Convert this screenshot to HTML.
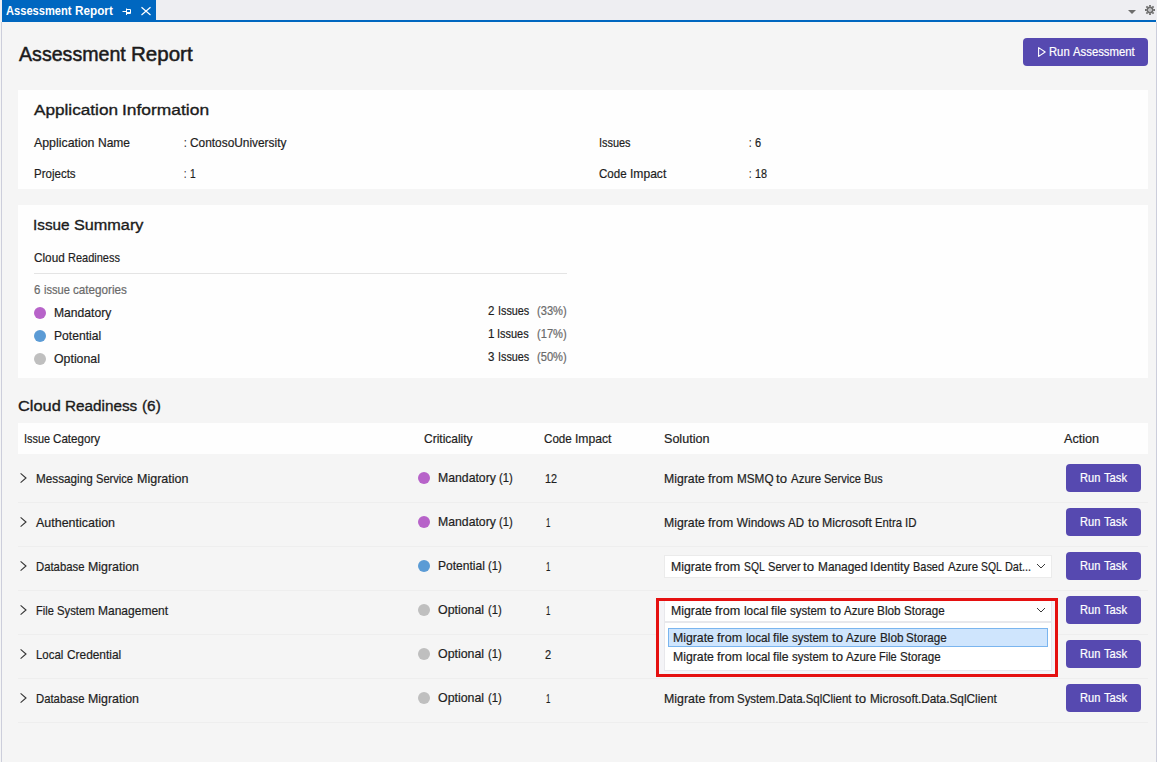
<!DOCTYPE html>
<html><head><meta charset="utf-8"><title>Assessment Report</title>
<style>
html,body{margin:0;padding:0}
body{width:1157px;height:762px;overflow:hidden;background:#f5f5f5;font-family:"Liberation Sans",sans-serif;position:relative}
.a{position:absolute}
.t{position:absolute;white-space:nowrap;line-height:1;transform-origin:0 0}
.t{color:#1e1e1e;-webkit-text-stroke:0.2px}
.dot{width:12px;height:12px;border-radius:50%}
</style></head><body>
<!-- window chrome -->
<div class="a" style="left:0;top:0;width:1157px;height:20px;background:#eeeef2"></div>
<div class="a" style="left:2px;top:0;width:154px;height:22px;background:#0067c0"></div>
<div class="a" style="left:2px;top:20px;width:1154px;height:2px;background:#0067c0"></div>
<div class="a" style="left:1px;top:22px;width:1px;height:740px;background:#ccceDB"></div>
<div class="a" style="left:1156px;top:22px;width:1px;height:740px;background:#ccceDB"></div>
<!-- tab icons -->
<svg class="a" style="left:120px;top:4px" width="36" height="16" viewBox="0 0 36 16">
 <g fill="none" stroke="#fff" stroke-width="1">
  <path d="M2.5 7.5H6M6.5 4.5v6.5M6.5 5.5H10.5V9.5H6.5M6.5 8.5H10.5"/>
  <path d="M21.5 3.3L30.5 11M30.5 3.3L21.5 11" stroke-width="1.2"/>
 </g>
</svg>
<svg class="a" style="left:1126px;top:3px" width="31" height="15" viewBox="0 0 31 15">
 <path d="M2 7H10L6 11Z" fill="#6d6d6d"/>
 <g transform="translate(24,7)" fill="none" stroke="#6d6d6d">
  <circle r="2.6" stroke-width="1.6"/><circle r="0.7" fill="#6d6d6d" stroke="none"/>
  <g stroke-width="1.8"><path d="M0-5V-3.2M0 5V3.2M-5 0H-3.2M5 0H3.2M-3.6-3.6L-2.4-2.4M3.6 3.6L2.4 2.4M-3.6 3.6L-2.4 2.4M3.6-3.6L2.4-2.4"/></g>
 </g>
</svg>
<!-- run assessment button -->
<div class="a" style="left:1023px;top:38px;width:125px;height:28px;background:#5649b0;border-radius:4px"></div>
<svg class="a" style="left:1036px;top:45px" width="12" height="14" viewBox="0 0 12 14"><path d="M2.6 2.6L9.2 7L2.6 11.4Z" fill="none" stroke="#fff" stroke-width="1.1" stroke-linejoin="round"/></svg>
<!-- panels -->
<div class="a" style="left:18px;top:90px;width:1130px;height:99px;background:#fefefe"></div>
<div class="a" style="left:18px;top:205px;width:1130px;height:173px;background:#fefefe"></div>
<div class="a" style="left:34px;top:273px;width:533px;height:1px;background:#e4e4e4"></div>
<div class="a dot" style="left:34px;top:307px;background:#b763c9"></div>
<div class="a dot" style="left:34px;top:330px;background:#5b9bd5"></div>
<div class="a dot" style="left:34px;top:353px;background:#bfbfbf"></div>
<!-- table -->
<div class="a" style="left:18px;top:423px;width:1130px;height:31px;background:#fefefe"></div>
<div class="a" style="left:18px;top:502px;width:1130px;height:1px;background:#eee"></div>
<svg class="a" style="left:18px;top:471px" width="12" height="14" viewBox="0 0 12 14"><path d="M2.6 2.4L8 7L2.6 11.6" fill="none" stroke="#333" stroke-width="1.1"/></svg>
<div class="a dot" style="left:418px;top:472px;background:#b763c9"></div>
<div class="a" style="left:1066px;top:464px;width:75px;height:28px;background:#5649b0;border-radius:4px"></div>
<div class="a" style="left:18px;top:546px;width:1130px;height:1px;background:#eee"></div>
<svg class="a" style="left:18px;top:515px" width="12" height="14" viewBox="0 0 12 14"><path d="M2.6 2.4L8 7L2.6 11.6" fill="none" stroke="#333" stroke-width="1.1"/></svg>
<div class="a dot" style="left:418px;top:516px;background:#b763c9"></div>
<div class="a" style="left:1066px;top:508px;width:75px;height:28px;background:#5649b0;border-radius:4px"></div>
<div class="a" style="left:18px;top:590px;width:1130px;height:1px;background:#eee"></div>
<svg class="a" style="left:18px;top:559px" width="12" height="14" viewBox="0 0 12 14"><path d="M2.6 2.4L8 7L2.6 11.6" fill="none" stroke="#333" stroke-width="1.1"/></svg>
<div class="a dot" style="left:418px;top:560px;background:#5b9bd5"></div>
<div class="a" style="left:1066px;top:552px;width:75px;height:28px;background:#5649b0;border-radius:4px"></div>
<div class="a" style="left:18px;top:634px;width:1130px;height:1px;background:#eee"></div>
<svg class="a" style="left:18px;top:603px" width="12" height="14" viewBox="0 0 12 14"><path d="M2.6 2.4L8 7L2.6 11.6" fill="none" stroke="#333" stroke-width="1.1"/></svg>
<div class="a dot" style="left:418px;top:604px;background:#bfbfbf"></div>
<div class="a" style="left:1066px;top:596px;width:75px;height:28px;background:#5649b0;border-radius:4px"></div>
<div class="a" style="left:18px;top:678px;width:1130px;height:1px;background:#eee"></div>
<svg class="a" style="left:18px;top:647px" width="12" height="14" viewBox="0 0 12 14"><path d="M2.6 2.4L8 7L2.6 11.6" fill="none" stroke="#333" stroke-width="1.1"/></svg>
<div class="a dot" style="left:418px;top:648px;background:#bfbfbf"></div>
<div class="a" style="left:1066px;top:640px;width:75px;height:28px;background:#5649b0;border-radius:4px"></div>
<div class="a" style="left:18px;top:722px;width:1130px;height:1px;background:#eee"></div>
<svg class="a" style="left:18px;top:691px" width="12" height="14" viewBox="0 0 12 14"><path d="M2.6 2.4L8 7L2.6 11.6" fill="none" stroke="#333" stroke-width="1.1"/></svg>
<div class="a dot" style="left:418px;top:692px;background:#bfbfbf"></div>
<div class="a" style="left:1066px;top:684px;width:75px;height:28px;background:#5649b0;border-radius:4px"></div>
<div class="a" style="left:664px;top:555px;width:388px;height:23px;background:#fff;box-sizing:border-box;border:1px solid #ebebeb"></div>
<svg class="a" style="left:1035px;top:561px" width="12" height="10" viewBox="0 0 12 10"><path d="M2 3L6 7L10 3" fill="none" stroke="#3b3b3b" stroke-width="1"/></svg>
<div class="a" style="left:659px;top:601px;width:396px;height:73px;background:#f4f4f7"></div>
<div class="a" style="left:664px;top:599px;width:388px;height:23px;background:#fff;box-sizing:border-box;border:1px solid #e8e8ec"></div>
<div class="a" style="left:664px;top:622px;width:388px;height:49px;background:#fff;box-sizing:border-box;border:1px solid #e8e8ec"></div>
<div class="a" style="left:668px;top:628px;width:380px;height:19px;background:#cfe5fd;box-sizing:border-box;border:1px solid #7ab5ef"></div>
<svg class="a" style="left:1035px;top:605px" width="12" height="10" viewBox="0 0 12 10"><path d="M2 3L6 7L10 3" fill="none" stroke="#3b3b3b" stroke-width="1"/></svg>
<div class="a" style="left:656px;top:598px;width:402px;height:79px;box-sizing:border-box;border:3px solid #e51010"></div>
<span class="t" style="left:5.97px;top:5px;font-size:12px;font-weight:700;-webkit-text-stroke:0;color:#ffffff;transform:scaleX(0.9272)">Assessment</span>
<span class="t" style="left:75.01px;top:5px;font-size:12px;font-weight:700;-webkit-text-stroke:0;color:#ffffff;transform:scaleX(0.9789)">Report</span>
<span class="t" style="left:18.60px;top:45px;font-size:19.8px;-webkit-text-stroke:0.5px;color:#1b1b1b;transform:scaleX(0.9912)">Assessment</span>
<span class="t" style="left:131.07px;top:45px;font-size:19.8px;-webkit-text-stroke:0.5px;color:#1b1b1b;transform:scaleX(1.0385)">Report</span>
<span class="t" style="left:1049.05px;top:47px;font-size:11.9px;color:#ffffff;transform:scaleX(0.9461)">Run</span>
<span class="t" style="left:1072.98px;top:47px;font-size:11.9px;color:#ffffff;transform:scaleX(0.9532)">Assessment</span>
<span class="t" style="left:33.80px;top:102px;font-size:15.5px;-webkit-text-stroke:0.35px;color:#1b1b1b;transform:scaleX(1.1076)">Application</span>
<span class="t" style="left:122.38px;top:102px;font-size:15.5px;-webkit-text-stroke:0.35px;color:#1b1b1b;transform:scaleX(1.1232)">Information</span>
<span class="t" style="left:34.40px;top:138px;font-size:11.9px;transform:scaleX(1.0390)">Application</span>
<span class="t" style="left:98.15px;top:138px;font-size:11.9px;transform:scaleX(1.0096)">Name</span>
<span class="t" style="left:184.31px;top:138px;font-size:11.9px;transform:scaleX(0.7851)">:</span>
<span class="t" style="left:190.20px;top:138px;font-size:11.9px;transform:scaleX(0.9990)">ContosoUniversity</span>
<span class="t" style="left:34.43px;top:169px;font-size:11.9px;transform:scaleX(0.9687)">Projects</span>
<span class="t" style="left:184.41px;top:169px;font-size:11.9px;transform:scaleX(0.6878)">:</span>
<span class="t" style="left:189.57px;top:169px;font-size:11.9px;transform:scaleX(0.8551)">1</span>
<span class="t" style="left:599.48px;top:138px;font-size:11.9px;transform:scaleX(0.9182)">Issues</span>
<span class="t" style="left:749.36px;top:138px;font-size:11.9px;transform:scaleX(0.7429)">:</span>
<span class="t" style="left:754.93px;top:138px;font-size:11.9px;transform:scaleX(0.9236)">6</span>
<span class="t" style="left:599.31px;top:169px;font-size:11.9px;transform:scaleX(0.9731)">Code</span>
<span class="t" style="left:630.26px;top:169px;font-size:11.9px;transform:scaleX(1.0166)">Impact</span>
<span class="t" style="left:749.37px;top:169px;font-size:11.9px;transform:scaleX(0.7287)">:</span>
<span class="t" style="left:754.84px;top:169px;font-size:11.9px;transform:scaleX(0.9070)">18</span>
<span class="t" style="left:33.12px;top:217px;font-size:15.5px;-webkit-text-stroke:0.35px;color:#1b1b1b;transform:scaleX(0.9872)">Issue</span>
<span class="t" style="left:74.26px;top:217px;font-size:15.5px;-webkit-text-stroke:0.35px;color:#1b1b1b;transform:scaleX(1.0467)">Summary</span>
<span class="t" style="left:34.11px;top:253px;font-size:11.9px;transform:scaleX(0.9887)">Cloud</span>
<span class="t" style="left:68.07px;top:253px;font-size:11.9px;transform:scaleX(0.9243)">Readiness</span>
<span class="t" style="left:34.22px;top:285px;font-size:11.9px;color:#6a6a6a;transform:scaleX(0.9653)">6</span>
<span class="t" style="left:43.86px;top:285px;font-size:11.9px;color:#6a6a6a;transform:scaleX(0.9309)">issue</span>
<span class="t" style="left:72.96px;top:285px;font-size:11.9px;color:#6a6a6a;transform:scaleX(0.9824)">categories</span>
<span class="t" style="left:54.28px;top:308px;font-size:11.9px;transform:scaleX(1.0208)">Mandatory</span>
<span class="t" style="left:488.12px;top:306px;font-size:11.9px;transform:scaleX(0.9680)">2</span>
<span class="t" style="left:497.79px;top:306px;font-size:11.9px;transform:scaleX(0.9092)">Issues</span>
<span class="t" style="left:537.30px;top:306px;font-size:11.9px;color:#6a6a6a;transform:scaleX(0.9355)">(33%)</span>
<span class="t" style="left:54.28px;top:331px;font-size:11.9px;transform:scaleX(1.0180)">Potential</span>
<span class="t" style="left:487.62px;top:329px;font-size:11.9px;transform:scaleX(0.9799)">1</span>
<span class="t" style="left:497.41px;top:329px;font-size:11.9px;transform:scaleX(0.9203)">Issues</span>
<span class="t" style="left:537.30px;top:329px;font-size:11.9px;color:#6a6a6a;transform:scaleX(0.9355)">(17%)</span>
<span class="t" style="left:54.38px;top:354px;font-size:11.9px;transform:scaleX(1.0372)">Optional</span>
<span class="t" style="left:488.12px;top:352px;font-size:11.9px;transform:scaleX(0.9680)">3</span>
<span class="t" style="left:497.79px;top:352px;font-size:11.9px;transform:scaleX(0.9092)">Issues</span>
<span class="t" style="left:537.30px;top:352px;font-size:11.9px;color:#6a6a6a;transform:scaleX(0.9355)">(50%)</span>
<span class="t" style="left:18.11px;top:398px;font-size:15.5px;-webkit-text-stroke:0.35px;color:#1b1b1b;transform:scaleX(1.0559)">Cloud</span>
<span class="t" style="left:65.38px;top:398px;font-size:15.5px;-webkit-text-stroke:0.35px;color:#1b1b1b;transform:scaleX(0.9868)">Readiness</span>
<span class="t" style="left:142.16px;top:398px;font-size:15.5px;-webkit-text-stroke:0.35px;color:#1b1b1b;transform:scaleX(0.9911)">(6)</span>
<span class="t" style="left:24.08px;top:434px;font-size:11.9px;transform:scaleX(0.9156)">Issue</span>
<span class="t" style="left:53.34px;top:434px;font-size:11.9px;transform:scaleX(0.9773)">Category</span>
<span class="t" style="left:424.10px;top:434px;font-size:11.9px;transform:scaleX(1.0073)">Criticality</span>
<span class="t" style="left:544.11px;top:434px;font-size:11.9px;transform:scaleX(0.9774)">Code</span>
<span class="t" style="left:575.19px;top:434px;font-size:11.9px;transform:scaleX(1.0212)">Impact</span>
<span class="t" style="left:664.07px;top:434px;font-size:11.9px;transform:scaleX(1.0563)">Solution</span>
<span class="t" style="left:1064.40px;top:434px;font-size:11.9px;transform:scaleX(1.0636)">Action</span>
<span class="t" style="left:36.21px;top:474px;font-size:11.9px;transform:scaleX(0.9866)">Messaging</span>
<span class="t" style="left:96.23px;top:474px;font-size:11.9px;transform:scaleX(0.9341)">Service</span>
<span class="t" style="left:136.53px;top:474px;font-size:11.9px;transform:scaleX(1.0522)">Migration</span>
<span class="t" style="left:438.07px;top:473px;font-size:11.9px;transform:scaleX(1.0300)">Mandatory</span>
<span class="t" style="left:499.23px;top:473px;font-size:11.9px;transform:scaleX(0.9430)">(1)</span>
<span class="t" style="left:545.09px;top:474px;font-size:11.9px;transform:scaleX(0.9106)">12</span>
<span class="t" style="left:1080.07px;top:473px;font-size:11.9px;color:#ffffff;transform:scaleX(0.9324)">Run</span>
<span class="t" style="left:1103.65px;top:473px;font-size:11.9px;color:#ffffff;transform:scaleX(0.9410)">Task</span>
<span class="t" style="left:35.80px;top:518px;font-size:11.9px;transform:scaleX(1.0488)">Authentication</span>
<span class="t" style="left:438.07px;top:517px;font-size:11.9px;transform:scaleX(1.0300)">Mandatory</span>
<span class="t" style="left:499.23px;top:517px;font-size:11.9px;transform:scaleX(0.9430)">(1)</span>
<span class="t" style="left:545.94px;top:518px;font-size:11.9px;transform:scaleX(0.6600)">1</span>
<span class="t" style="left:1080.07px;top:517px;font-size:11.9px;color:#ffffff;transform:scaleX(0.9324)">Run</span>
<span class="t" style="left:1103.65px;top:517px;font-size:11.9px;color:#ffffff;transform:scaleX(0.9410)">Task</span>
<span class="t" style="left:36.25px;top:562px;font-size:11.9px;transform:scaleX(0.9513)">Database</span>
<span class="t" style="left:87.91px;top:562px;font-size:11.9px;transform:scaleX(1.0423)">Migration</span>
<span class="t" style="left:438.09px;top:561px;font-size:11.9px;transform:scaleX(1.0144)">Potential</span>
<span class="t" style="left:488.32px;top:561px;font-size:11.9px;transform:scaleX(0.9437)">(1)</span>
<span class="t" style="left:545.94px;top:562px;font-size:11.9px;transform:scaleX(0.6600)">1</span>
<span class="t" style="left:1080.07px;top:561px;font-size:11.9px;color:#ffffff;transform:scaleX(0.9324)">Run</span>
<span class="t" style="left:1103.65px;top:561px;font-size:11.9px;color:#ffffff;transform:scaleX(0.9410)">Task</span>
<span class="t" style="left:36.27px;top:606px;font-size:11.9px;transform:scaleX(0.9281)">File</span>
<span class="t" style="left:57.32px;top:606px;font-size:11.9px;transform:scaleX(0.9512)">System</span>
<span class="t" style="left:98.30px;top:606px;font-size:11.9px;transform:scaleX(1.0100)">Management</span>
<span class="t" style="left:438.18px;top:605px;font-size:11.9px;transform:scaleX(1.0408)">Optional</span>
<span class="t" style="left:487.58px;top:605px;font-size:11.9px;transform:scaleX(0.9466)">(1)</span>
<span class="t" style="left:545.94px;top:606px;font-size:11.9px;transform:scaleX(0.6600)">1</span>
<span class="t" style="left:1080.07px;top:605px;font-size:11.9px;color:#ffffff;transform:scaleX(0.9324)">Run</span>
<span class="t" style="left:1103.65px;top:605px;font-size:11.9px;color:#ffffff;transform:scaleX(0.9410)">Task</span>
<span class="t" style="left:36.24px;top:650px;font-size:11.9px;transform:scaleX(0.9610)">Local</span>
<span class="t" style="left:66.87px;top:650px;font-size:11.9px;transform:scaleX(0.9988)">Credential</span>
<span class="t" style="left:438.18px;top:649px;font-size:11.9px;transform:scaleX(1.0408)">Optional</span>
<span class="t" style="left:487.58px;top:649px;font-size:11.9px;transform:scaleX(0.9466)">(1)</span>
<span class="t" style="left:545.34px;top:650px;font-size:11.9px;transform:scaleX(0.9273)">2</span>
<span class="t" style="left:1080.07px;top:649px;font-size:11.9px;color:#ffffff;transform:scaleX(0.9324)">Run</span>
<span class="t" style="left:1103.65px;top:649px;font-size:11.9px;color:#ffffff;transform:scaleX(0.9410)">Task</span>
<span class="t" style="left:36.25px;top:694px;font-size:11.9px;transform:scaleX(0.9513)">Database</span>
<span class="t" style="left:87.91px;top:694px;font-size:11.9px;transform:scaleX(1.0423)">Migration</span>
<span class="t" style="left:438.18px;top:693px;font-size:11.9px;transform:scaleX(1.0408)">Optional</span>
<span class="t" style="left:487.58px;top:693px;font-size:11.9px;transform:scaleX(0.9466)">(1)</span>
<span class="t" style="left:545.94px;top:694px;font-size:11.9px;transform:scaleX(0.6600)">1</span>
<span class="t" style="left:1080.07px;top:693px;font-size:11.9px;color:#ffffff;transform:scaleX(0.9324)">Run</span>
<span class="t" style="left:1103.65px;top:693px;font-size:11.9px;color:#ffffff;transform:scaleX(0.9410)">Task</span>
<span class="t" style="left:664.17px;top:474px;font-size:11.9px;transform:scaleX(1.0306)">Migrate</span>
<span class="t" style="left:708.29px;top:474px;font-size:11.9px;transform:scaleX(1.0573)">from</span>
<span class="t" style="left:736.69px;top:474px;font-size:11.9px;transform:scaleX(0.9875)">MSMQ</span>
<span class="t" style="left:776.48px;top:474px;font-size:11.9px;transform:scaleX(1.1065)">to</span>
<span class="t" style="left:790.71px;top:474px;font-size:11.9px;transform:scaleX(0.9669)">Azure</span>
<span class="t" style="left:823.99px;top:474px;font-size:11.9px;transform:scaleX(0.9294)">Service</span>
<span class="t" style="left:864.10px;top:474px;font-size:11.9px;transform:scaleX(0.9039)">Bus</span>
<span class="t" style="left:664.17px;top:518px;font-size:11.9px;transform:scaleX(1.0317)">Migrate</span>
<span class="t" style="left:708.33px;top:518px;font-size:11.9px;transform:scaleX(1.0584)">from</span>
<span class="t" style="left:736.77px;top:518px;font-size:11.9px;transform:scaleX(1.0000)">Windows</span>
<span class="t" style="left:788.27px;top:518px;font-size:11.9px;transform:scaleX(0.9667)">AD</span>
<span class="t" style="left:807.51px;top:518px;font-size:11.9px;transform:scaleX(1.1077)">to</span>
<span class="t" style="left:821.75px;top:518px;font-size:11.9px;transform:scaleX(1.0336)">Microsoft</span>
<span class="t" style="left:874.86px;top:518px;font-size:11.9px;transform:scaleX(0.9465)">Entra</span>
<span class="t" style="left:905.01px;top:518px;font-size:11.9px;transform:scaleX(0.9644)">ID</span>
<span class="t" style="left:671.07px;top:562px;font-size:11.9px;transform:scaleX(1.0299)">Migrate</span>
<span class="t" style="left:715.16px;top:562px;font-size:11.9px;transform:scaleX(1.0566)">from</span>
<span class="t" style="left:743.55px;top:562px;font-size:11.9px;transform:scaleX(0.8745)">SQL</span>
<span class="t" style="left:767.61px;top:562px;font-size:11.9px;transform:scaleX(0.9309)">Server</span>
<span class="t" style="left:803.46px;top:562px;font-size:11.9px;transform:scaleX(1.1058)">to</span>
<span class="t" style="left:817.68px;top:562px;font-size:11.9px;transform:scaleX(0.9987)">Managed</span>
<span class="t" style="left:870.46px;top:562px;font-size:11.9px;transform:scaleX(1.0326)">Identity</span>
<span class="t" style="left:913.30px;top:562px;font-size:11.9px;transform:scaleX(0.9199)">Based</span>
<span class="t" style="left:947.56px;top:562px;font-size:11.9px;transform:scaleX(0.9663)">Azure</span>
<span class="t" style="left:980.83px;top:562px;font-size:11.9px;transform:scaleX(0.8745)">SQL</span>
<span class="t" style="left:1004.88px;top:562px;font-size:11.9px;transform:scaleX(0.9170)">Dat...</span>
<span class="t" style="left:671.07px;top:606px;font-size:11.9px;transform:scaleX(1.0328)">Migrate</span>
<span class="t" style="left:715.28px;top:606px;font-size:11.9px;transform:scaleX(1.0595)">from</span>
<span class="t" style="left:743.75px;top:606px;font-size:11.9px;transform:scaleX(0.9918)">local</span>
<span class="t" style="left:771.27px;top:606px;font-size:11.9px;transform:scaleX(1.0321)">file</span>
<span class="t" style="left:790.22px;top:606px;font-size:11.9px;transform:scaleX(0.9664)">system</span>
<span class="t" style="left:829.88px;top:606px;font-size:11.9px;transform:scaleX(1.1089)">to</span>
<span class="t" style="left:844.14px;top:606px;font-size:11.9px;transform:scaleX(0.9690)">Azure</span>
<span class="t" style="left:877.49px;top:606px;font-size:11.9px;transform:scaleX(0.9933)">Blob</span>
<span class="t" style="left:904.40px;top:606px;font-size:11.9px;transform:scaleX(0.9769)">Storage</span>
<span class="t" style="left:673.27px;top:633px;font-size:11.9px;transform:scaleX(1.0320)">Migrate</span>
<span class="t" style="left:717.45px;top:633px;font-size:11.9px;transform:scaleX(1.0588)">from</span>
<span class="t" style="left:745.90px;top:633px;font-size:11.9px;transform:scaleX(0.9911)">local</span>
<span class="t" style="left:773.40px;top:633px;font-size:11.9px;transform:scaleX(1.0313)">file</span>
<span class="t" style="left:792.33px;top:633px;font-size:11.9px;transform:scaleX(0.9657)">system</span>
<span class="t" style="left:831.96px;top:633px;font-size:11.9px;transform:scaleX(1.1081)">to</span>
<span class="t" style="left:846.21px;top:633px;font-size:11.9px;transform:scaleX(0.9683)">Azure</span>
<span class="t" style="left:879.54px;top:633px;font-size:11.9px;transform:scaleX(0.9926)">Blob</span>
<span class="t" style="left:906.43px;top:633px;font-size:11.9px;transform:scaleX(0.9762)">Storage</span>
<span class="t" style="left:673.27px;top:652px;font-size:11.9px;transform:scaleX(1.0304)">Migrate</span>
<span class="t" style="left:717.38px;top:652px;font-size:11.9px;transform:scaleX(1.0571)">from</span>
<span class="t" style="left:745.78px;top:652px;font-size:11.9px;transform:scaleX(0.9895)">local</span>
<span class="t" style="left:773.24px;top:652px;font-size:11.9px;transform:scaleX(1.0297)">file</span>
<span class="t" style="left:792.14px;top:652px;font-size:11.9px;transform:scaleX(0.9642)">system</span>
<span class="t" style="left:831.71px;top:652px;font-size:11.9px;transform:scaleX(1.1063)">to</span>
<span class="t" style="left:845.94px;top:652px;font-size:11.9px;transform:scaleX(0.9667)">Azure</span>
<span class="t" style="left:879.21px;top:652px;font-size:11.9px;transform:scaleX(0.9249)">File</span>
<span class="t" style="left:900.20px;top:652px;font-size:11.9px;transform:scaleX(0.9747)">Storage</span>
<span class="t" style="left:664.16px;top:694px;font-size:11.9px;transform:scaleX(1.0412)">Migrate</span>
<span class="t" style="left:708.73px;top:694px;font-size:11.9px;transform:scaleX(1.0682)">from</span>
<span class="t" style="left:737.43px;top:694px;font-size:11.9px;transform:scaleX(0.9622)">System.Data.SqlClient</span>
<span class="t" style="left:855.18px;top:694px;font-size:11.9px;transform:scaleX(1.1180)">to</span>
<span class="t" style="left:869.55px;top:694px;font-size:11.9px;transform:scaleX(0.9941)">Microsoft.Data.SqlClient</span>
</body></html>
